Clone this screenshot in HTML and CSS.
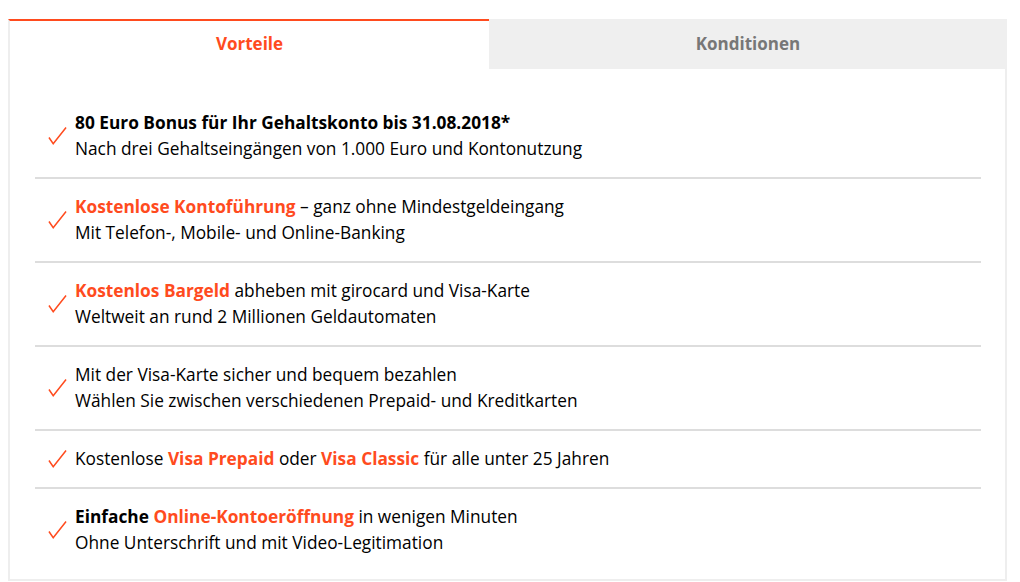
FILE: index.html
```html
<!DOCTYPE html>
<html lang="de">
<head>
  <meta charset="UTF-8">
  <meta name="viewport" content="width=device-width, initial-scale=1.0">
  <title>Girokonto – Vorteile</title>
  <link rel="stylesheet" href="styles.css">
</head>
<body>
  <div class="tabs">
    <div class="tab-bar">
      <div class="tab active">Vorteile</div>
      <div class="tab">Konditionen</div>
    </div>

    <div class="panel">
      <ul class="benefits">
        <li>
          <svg class="check" viewBox="0 0 20 20"><path d="M1 11 L5.5 17.5 L19 0.5"/></svg>
          <div class="text">
            <strong>80 Euro Bonus für Ihr Gehaltskonto bis 31.08.2018*</strong><br>
            Nach drei Gehaltseingängen von 1.000 Euro und Kontonutzung
          </div>
        </li>
        <li>
          <svg class="check" viewBox="0 0 20 20"><path d="M1 11 L5.5 17.5 L19 0.5"/></svg>
          <div class="text">
            <span class="hl">Kostenlose Kontoführung</span> – ganz ohne Mindestgeldeingang<br>
            Mit Telefon-, Mobile- und Online-Banking
          </div>
        </li>
        <li>
          <svg class="check" viewBox="0 0 20 20"><path d="M1 11 L5.5 17.5 L19 0.5"/></svg>
          <div class="text">
            <span class="hl">Kostenlos Bargeld</span> abheben mit girocard und Visa-Karte<br>
            Weltweit an rund 2 Millionen Geldautomaten
          </div>
        </li>
        <li>
          <svg class="check" viewBox="0 0 20 20"><path d="M1 11 L5.5 17.5 L19 0.5"/></svg>
          <div class="text">
            Mit der Visa-Karte sicher und bequem bezahlen<br>
            Wählen Sie zwischen verschiedenen Prepaid- und Kreditkarten
          </div>
        </li>
        <li>
          <svg class="check" viewBox="0 0 20 20"><path d="M1 11 L5.5 17.5 L19 0.5"/></svg>
          <div class="text">
            Kostenlose <span class="hl">Visa Prepaid</span> oder <span class="hl">Visa Classic</span> für alle unter 25 Jahren
          </div>
        </li>
        <li>
          <svg class="check" viewBox="0 0 20 20"><path d="M1 11 L5.5 17.5 L19 0.5"/></svg>
          <div class="text">
            <strong>Einfache</strong> <span class="hl">Online-Kontoeröffnung</span> in wenigen Minuten<br>
            Ohne Unterschrift und mit Video-Legitimation
          </div>
        </li>
      </ul>
    </div>
  </div>
</body>
</html>
```

FILE: styles.css
```css
html, body {
  margin: 0;
  padding: 0;
  background: #fff;
  color: #000;
  font-family: "Open Sans", "Noto Sans", sans-serif;
}
.tabs {
  margin: 19px 13px 0 8px;
}
.tab-bar {
  display: flex;
}
.tab {
  flex: 1;
  height: 50px;
  padding-bottom: 2px;
  display: flex;
  align-items: center;
  justify-content: center;
  font-size: 17px;
  font-weight: 700;
  color: #777;
  background: #efefef;
  box-sizing: border-box;
}
.tab.active {
  color: #ff4b1e;
  background: #fff;
  border-top: 2px solid #ff4b1e;
  border-left: 2px solid #eee;
  padding-bottom: 4px;
  flex: 0 0 481px;
}
.panel {
  border: 2px solid #eee;
  border-top: none;
  padding: 41px 24px 23px 25px;
}
.benefits {
  list-style: none;
  margin: 0;
  padding: 0;
}
.benefits li {
  display: flex;
  align-items: center;
  padding: 15px 0;
  border-bottom: 2px solid #ddd;
}
.benefits li:first-child {
  padding-top: 0;
}
.benefits li:last-child {
  border-bottom: none;
  padding-bottom: 0;
}
.check {
  width: 19px;
  height: 19px;
  margin: 0 8px 0 13px;
  flex: none;
}
.check path {
  fill: none;
  stroke: #ff4b1e;
  stroke-width: 1.6;
}
.text {
  font-size: 17.3px;
  line-height: 26px;
}
.text strong {
  font-weight: 700;
}
.hl {
  color: #ff4b1e;
  font-weight: 700;
}
```
